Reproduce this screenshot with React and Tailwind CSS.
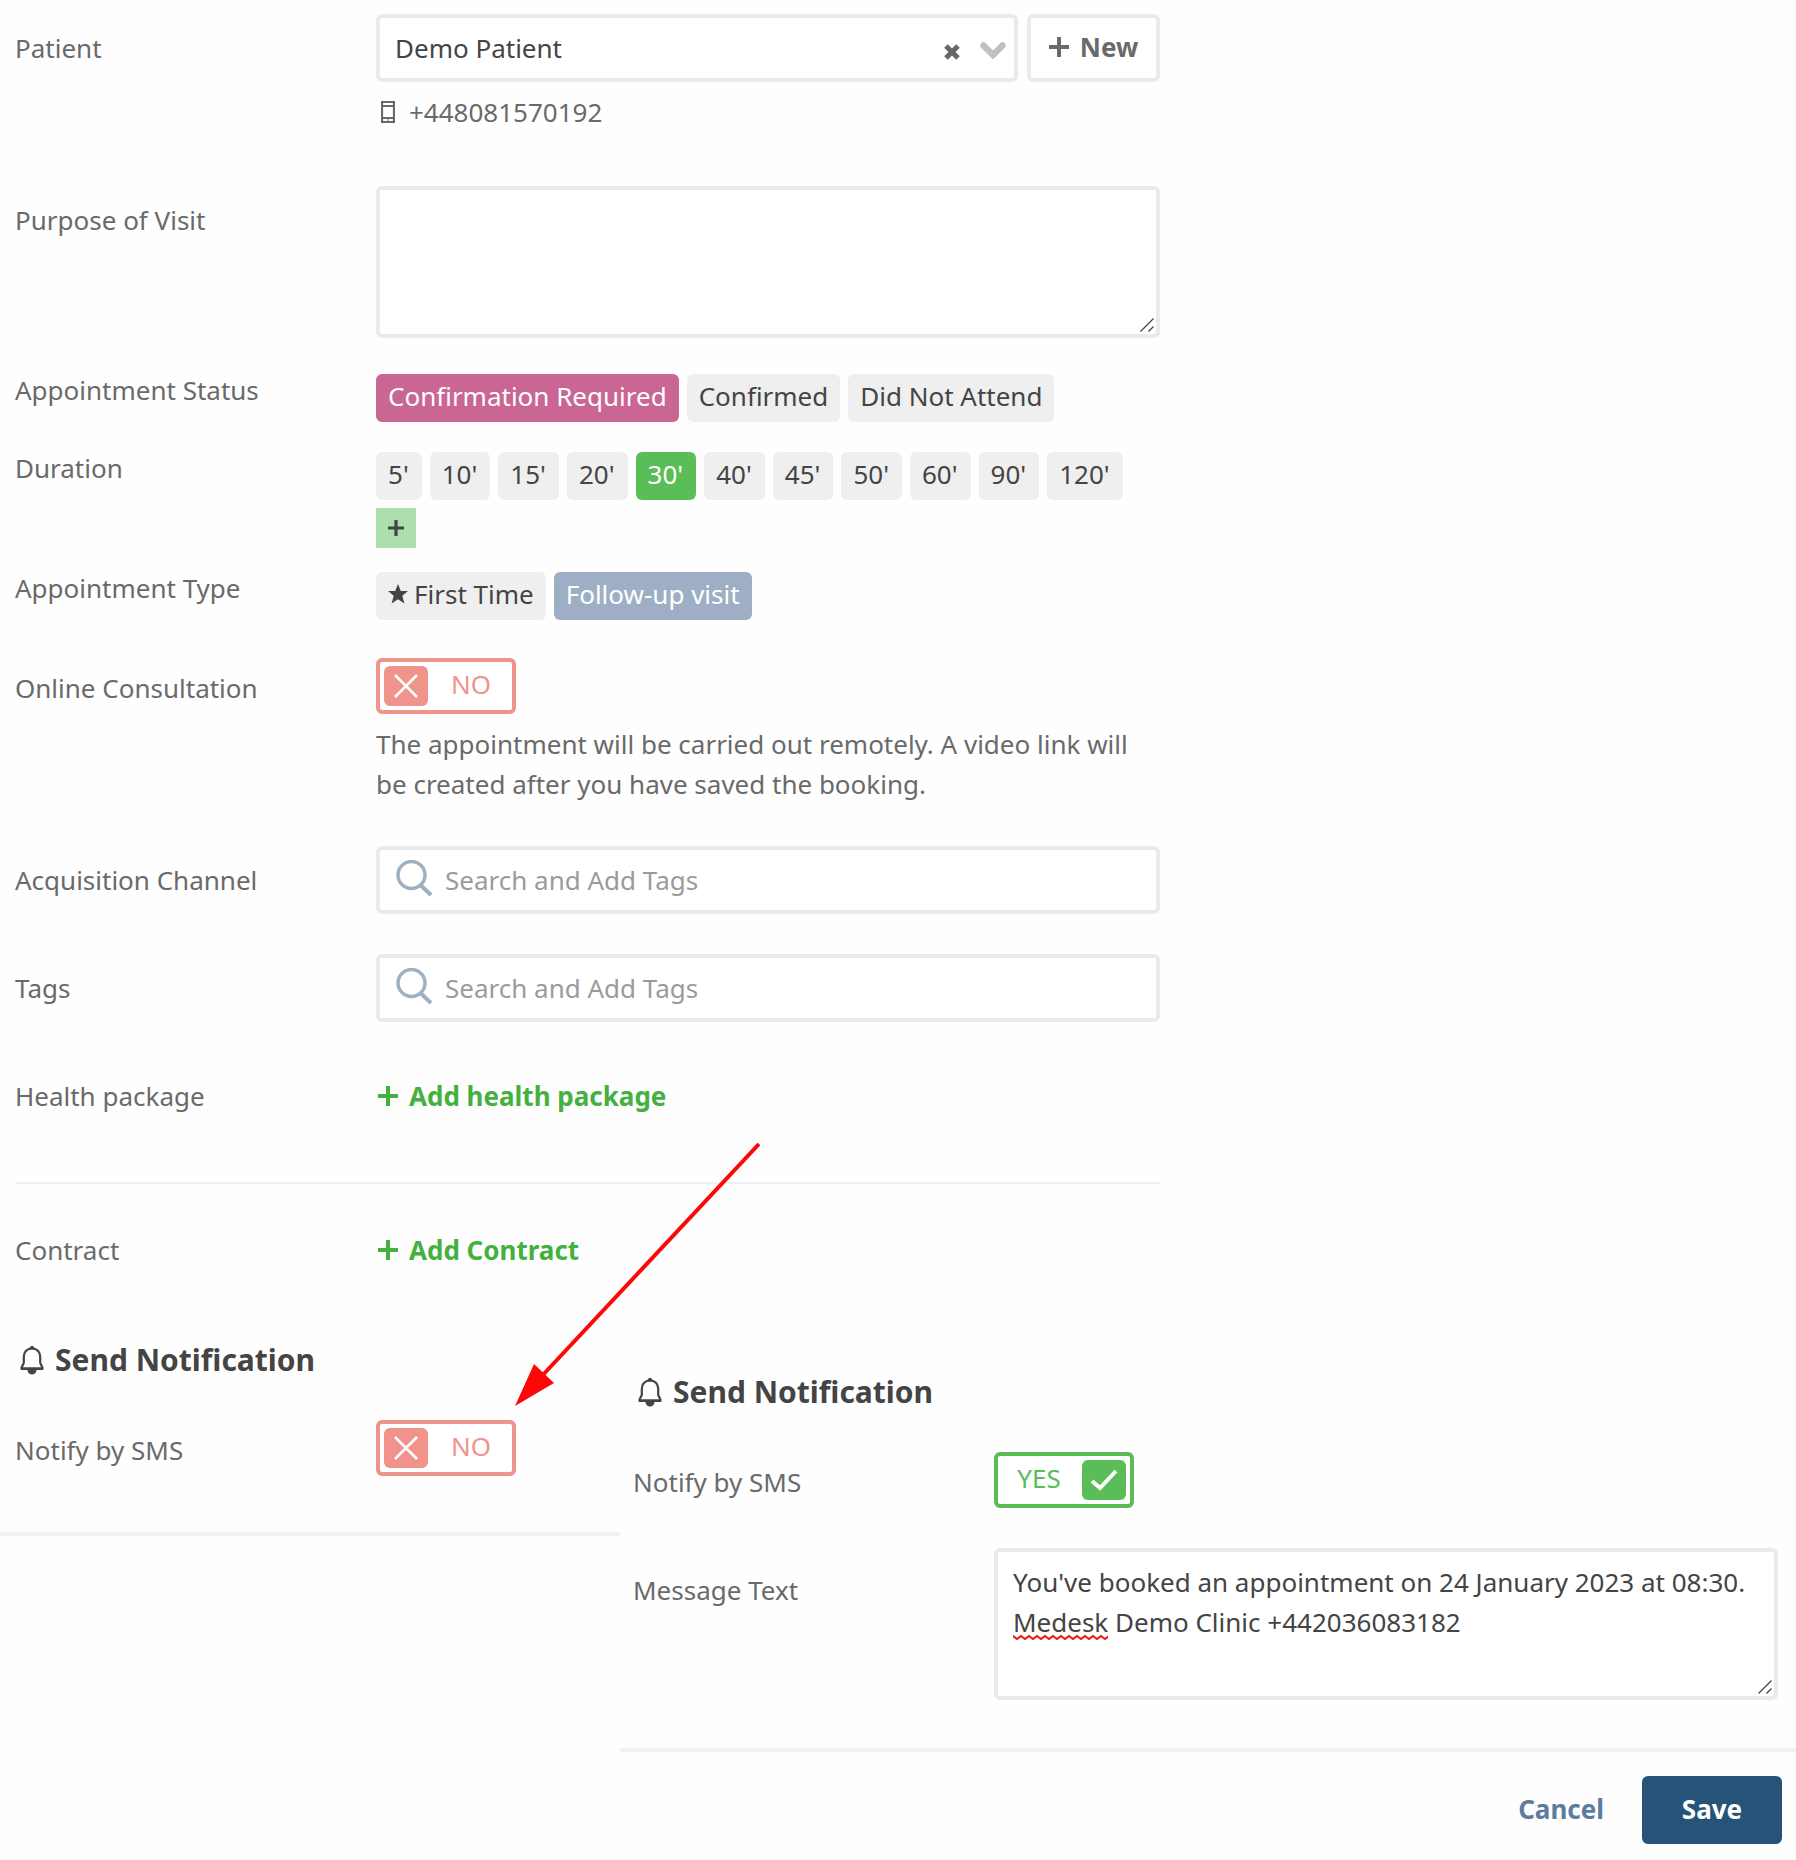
import React, { useState } from "react";

const FIELD = "border-4 border-[#e9eaee] rounded-md bg-white";

function PlusIcon({ className }) {
  return (
    <svg viewBox="0 0 20 20" className={className} aria-hidden="true">
      <path d="M10 0v20M0 10h20" stroke="currentColor" strokeWidth="4" fill="none" />
    </svg>
  );
}

function ClearIcon() {
  return (
    <svg viewBox="0 0 16 16" className="size-4" aria-hidden="true">
      <path d="M2 2l12 12M14 2L2 14" stroke="currentColor" strokeWidth="5" fill="none" />
    </svg>
  );
}

function ChevronIcon() {
  return (
    <svg viewBox="0 0 26 18" className="h-[18px] w-[26px]" aria-hidden="true">
      <path d="M3.500 3.500l9.500 9.500L22.500 3.500" stroke="currentColor" strokeWidth="6.500" strokeLinecap="round" fill="none" />
    </svg>
  );
}

function PhoneIcon() {
  return (
    <svg viewBox="0 0 14 22" className="h-[22px] w-[14px]" aria-hidden="true">
      <path d="M1 1h12v20H1zM1 5h12M1 17h12" stroke="currentColor" strokeWidth="2.200" fill="none" />
      <path d="M6 18.500h2v1H6z" fill="currentColor" />
    </svg>
  );
}

function StarIcon() {
  return (
    <svg viewBox="0 0 20 20" className="size-5" aria-hidden="true">
      <path d="M10 0l2.800 7H20l-5.700 4.700L16.400 19.500 10 15.200 3.600 19.500l2.100-7.800L0 7h7.200z" fill="currentColor" />
    </svg>
  );
}

function SearchIcon() {
  return (
    <svg viewBox="0 0 36 40" className="h-10 w-9" aria-hidden="true">
      <circle cx="15.500" cy="15" r="13.500" stroke="currentColor" strokeWidth="3.500" fill="none" />
      <path d="M24.500 25L35 35" stroke="currentColor" strokeWidth="4" fill="none" />
    </svg>
  );
}

function BellIcon() {
  return (
    <svg viewBox="0 0 24 30" className="h-[30px] w-6" aria-hidden="true">
      <path
        d="M12 3.500C6.500 3.500 3.800 7.500 3.800 12v5.500C3.800 19.500 1.500 21 1.500 23.500h21C22.500 21 20.200 19.500 20.200 17.500V12C20.200 7.500 17.500 3.500 12 3.500z"
        stroke="currentColor"
        strokeWidth="2.200"
        fill="none"
      />
      <path d="M8.500 4.500L10.500 1.500a2 2 0 0 1 3 0L15.500 4.500zM1 22.500h22v2.500h-6.500a4.500 4.500 0 0 1-9 0H1z" fill="currentColor" />
    </svg>
  );
}

function ResizeGrip() {
  return (
    <svg viewBox="0 0 14 14" className="pointer-events-none absolute right-[6px] bottom-[6px] size-[14px]" aria-hidden="true">
      <path d="M0.500 13.500L13.500 0.500M8.500 13.500L13.500 8.500" stroke="#444" strokeWidth="1.300" fill="none" />
    </svg>
  );
}

function Row({ label, htmlFor, className = "", labelClass = "", children }) {
  return (
    <div className={`grid grid-cols-[361px_minmax(0,1fr)] ${className}`}>
      {htmlFor ? (
        <label htmlFor={htmlFor} className={labelClass}>{label}</label>
      ) : (
        <span className={labelClass}>{label}</span>
      )}
      <div>{children}</div>
    </div>
  );
}

function Chip({ active, activeClass, padding = "px-3", onClick, children }) {
  return (
    <button
      type="button"
      aria-pressed={active}
      onClick={onClick}
      className={`flex h-12 items-center gap-[6px] rounded-md pb-1 ${padding} ${active ? activeClass : "bg-[#efefef] text-[#444]"}`}
    >
      {children}
    </button>
  );
}

function Toggle({ id, initial }) {
  const [on, setOn] = useState(initial);
  return (
    <label
      className={`relative flex h-14 w-[140px] items-center rounded-md border-4 bg-white px-1 ${
        on ? "flex-row-reverse border-[#5bbd58] text-[#5bbd58]" : "border-[#f0938b] text-[#f0938b]"
      }`}
    >
      <input id={id} type="checkbox" checked={on} onChange={() => setOn(!on)} className="sr-only" />
      <span className={`flex h-10 w-11 items-center justify-center rounded-md text-white ${on ? "bg-[#5bbd58]" : "bg-[#f0938b]"}`}>
        {on ? (
          <svg viewBox="0 0 28 22" className="h-[22px] w-7" aria-hidden="true">
            <path d="M2 12l8 7L26 2" stroke="currentColor" strokeWidth="4" fill="none" />
          </svg>
        ) : (
          <svg viewBox="0 0 24 24" className="size-6" aria-hidden="true">
            <path d="M1 1l22 22M23 1L1 23" stroke="currentColor" strokeWidth="2.500" fill="none" />
          </svg>
        )}
      </span>
      <span className={`flex-1 pb-1 text-center ${on ? "pr-[6px]" : "pl-[6px]"}`}>{on ? "YES" : "NO"}</span>
    </label>
  );
}

function TagSearch({ id }) {
  return (
    <div className={`flex h-[68px] items-center gap-[13px] px-4 text-[#a0b0c4] ${FIELD}`}>
      <SearchIcon />
      <input
        id={id}
        type="text"
        placeholder="Search and Add Tags"
        className="min-w-0 flex-1 text-[#444] outline-none placeholder:text-[#9b9b9b]"
      />
    </div>
  );
}

function AddLink({ children }) {
  return (
    <a href="#add" className="flex items-center gap-[11px] pl-0.5 font-bold text-[#43b03f]">
      <PlusIcon className="size-5" />
      {children}
    </a>
  );
}

function SectionTitle({ children }) {
  return (
    <h2 className="flex items-center gap-[11px] pl-[5px] text-[30px] leading-10 font-bold text-[#444]">
      <BellIcon />
      {children}
    </h2>
  );
}

const STATUSES = ["Confirmation Required", "Confirmed", "Did Not Attend"];
const DURATIONS = [5, 10, 15, 20, 30, 40, 45, 50, 60, 90, 120];

export default function App() {
  const [status, setStatus] = useState(STATUSES[0]);
  const [duration, setDuration] = useState(30);
  const [type, setType] = useState("follow");

  return (
    <main className="relative bg-[#fefefe] font-['Noto_Sans',sans-serif] text-[26px] leading-10 text-[#6a6a6a]">
      <section className="max-w-[1160px] pt-[14px] pl-[15px]">
        <Row label="Patient" htmlFor="patient" labelClass="pt-[14px]">
          <div className="flex gap-[9px]">
            <div className="relative flex-1">
              <select id="patient" className={`h-[68px] w-full appearance-none pl-[15px] text-[#444] ${FIELD}`}>
                <option>Demo Patient</option>
              </select>
              <button type="button" aria-label="Clear patient" className="absolute top-[30px] right-[58px] text-[#666]">
                <span className="block"><ClearIcon /></span>
              </button>
              <span className="pointer-events-none absolute top-[28px] right-3 block text-[#c0c0c0]">
                <ChevronIcon />
              </span>
            </div>
            <button type="button" className={`flex h-[68px] w-[133px] items-center justify-center gap-[11px] pb-[2px] font-bold ${FIELD}`}>
              <PlusIcon className="size-5" />
              New
            </button>
          </div>
          <p className="mt-[10px] flex items-center gap-[14px] pl-[5px]">
            <PhoneIcon />
            +448081570192
          </p>
        </Row>

        <Row label="Purpose of Visit" htmlFor="purpose" className="mt-[54px]" labelClass="pt-[14px]">
          <div className="relative">
            <textarea id="purpose" className={`block h-[152px] w-full resize-none px-[15px] py-[10px] text-[#444] ${FIELD}`} />
            <ResizeGrip />
          </div>
        </Row>

        <Row label="Appointment Status" className="mt-8">
          <div className="flex flex-wrap gap-2 pt-1">
            {STATUSES.map((s) => (
              <Chip key={s} active={s === status} activeClass="bg-[#c96693] text-white" onClick={() => setStatus(s)}>
                {s}
              </Chip>
            ))}
          </div>
        </Row>

        <Row label="Duration" className="mt-[26px]">
          <div className="flex flex-wrap gap-2 pt-1">
            {DURATIONS.map((d) => (
              <Chip
                key={d}
                active={d === duration}
                activeClass="bg-[#5bbd58] text-white"
                padding="pl-3 pr-[13px]"
                onClick={() => setDuration(d)}
              >
                {d}'
              </Chip>
            ))}
            <button type="button" aria-label="Add duration" className="flex size-10 items-center justify-center bg-[#addead] text-[#444]">
              <PlusIcon className="size-4" />
            </button>
          </div>
        </Row>

        <Row label="Appointment Type" className="mt-5">
          <div className="flex flex-wrap gap-2 pt-1">
            <Chip active={type === "first"} activeClass="bg-[#9eafc5] text-white" onClick={() => setType("first")}>
              <StarIcon />
              First Time
            </Chip>
            <Chip active={type === "follow"} activeClass="bg-[#9eafc5] text-white" onClick={() => setType("follow")}>
              Follow-up visit
            </Chip>
          </div>
        </Row>

        <Row label="Online Consultation" htmlFor="online" className="mt-[38px]" labelClass="pt-[10px]">
          <Toggle id="online" initial={false} />
          <p className="mt-[10px]">
            The appointment will be carried out remotely. A video link will be created after you have saved the booking.
          </p>
        </Row>

        <Row label="Acquisition Channel" htmlFor="channel" className="mt-[42px]" labelClass="pt-[14px]">
          <TagSearch id="channel" />
        </Row>

        <Row label="Tags" htmlFor="tags" className="mt-10" labelClass="pt-[14px]">
          <TagSearch id="tags" />
        </Row>

        <Row label="Health package" className="mt-[54px]">
          <AddLink>Add health package</AddLink>
        </Row>

        <hr className="mt-[66px] border-t-2 border-[#f0f1f1]" />

        <Row label="Contract" className="mt-[46px]">
          <AddLink>Add Contract</AddLink>
        </Row>
      </section>

      <div className="flex items-start">
        <section className="w-[620px] border-b-4 border-[#f1f2f4] pt-[70px] pb-14 pl-[15px]">
          <SectionTitle>Send Notification</SectionTitle>
          <Row label="Notify by SMS" htmlFor="sms-off" className="mt-10" labelClass="pt-[10px]">
            <Toggle id="sms-off" initial={false} />
          </Row>
        </section>

        <section className="min-w-0 flex-1 pt-[102px] pb-4">
          <div className="pr-[18px] pl-[13px]">
            <SectionTitle>Send Notification</SectionTitle>
            <Row label="Notify by SMS" htmlFor="sms-on" className="mt-10" labelClass="pt-[10px]">
              <Toggle id="sms-on" initial={true} />
            </Row>
            <Row label="Message Text" htmlFor="message" className="mt-10" labelClass="pt-[22px]">
              <div className="relative">
                <textarea
                  id="message"
                  spellCheck={false}
                  defaultValue={"You've booked an appointment on 24 January 2023 at 08:30.\nMedesk Demo Clinic +442036083182"}
                  className={`block h-[152px] w-full resize-none overflow-hidden px-[15px] py-[10px] text-[#444] ${FIELD}`}
                />
                <svg className="pointer-events-none absolute top-[87px] left-[19px] h-[5px] w-[95px]" aria-hidden="true">
                  <defs>
                    <pattern id="squiggle" width="8" height="5" patternUnits="userSpaceOnUse">
                      <path d="M-4 4L0 1L4 4L8 1L12 4" stroke="#f01414" strokeWidth="2" fill="none" />
                    </pattern>
                  </defs>
                  <rect width="100%" height="100%" fill="url(#squiggle)" />
                </svg>
                <ResizeGrip />
              </div>
            </Row>
          </div>
          <footer className="mt-12 flex items-center justify-end gap-[38px] border-t-4 border-[#f1f2f4] pt-6 pr-[14px] font-bold">
            <button type="button" className="pb-[2px] text-[#5b7c9d]">Cancel</button>
            <button type="button" className="h-[68px] w-[140px] rounded-md bg-[#285379] pb-[2px] text-white">Save</button>
          </footer>
        </section>
      </div>

      <svg viewBox="0 0 246 264" className="pointer-events-none absolute top-[1143px] left-[514px] h-[264px] w-[246px]" aria-hidden="true">
        <path d="M245 1L26 235" stroke="#fd0808" strokeWidth="4" fill="none" />
        <path d="M1 263L20 221L40 240z" fill="#fd0808" />
      </svg>
    </main>
  );
}
